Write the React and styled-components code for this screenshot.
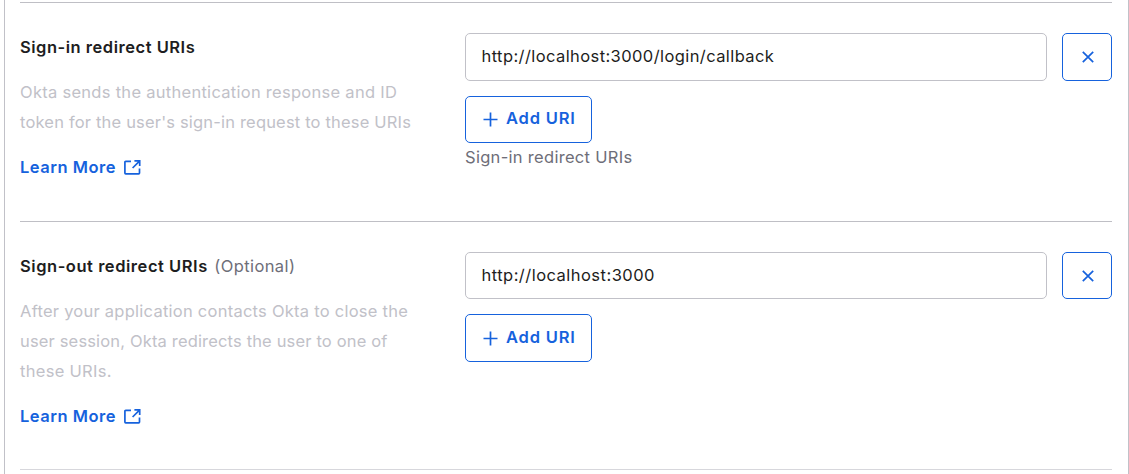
import React from "react";
import styled, { createGlobalStyle } from "styled-components";

const GlobalStyle = createGlobalStyle`
  * { box-sizing: border-box; }
  body {
    margin: 0;
    background: #fff;
    color: #1d1d21;
    font-family: Inter, "Liberation Sans", sans-serif;
    font-size: 16.5px;
    overflow: hidden;
  }
`;

const Panel = styled.main`
  width: 1125px;
  height: 474px;
  margin-left: 4px;
  padding: 2px 16px 0 15px;
  border: solid #c1c1c8;
  border-width: 0 1px;
  overflow: hidden;
`;

const Section = styled.section`
  display: flex;
  height: ${(p) => p.$height}px;
  padding-top: 30px;
  border-top: 1px solid ${(p) => p.$line || "#bfbfc5"};
`;

const Info = styled.div`
  width: 445px;
  flex: none;
`;

const Fields = styled.div`
  flex: 1;
`;

const Text = styled.span`
  letter-spacing: ${(p) => p.$track || 0}px;
  white-space: pre;
`;

const Heading = styled.h2`
  display: flex;
  gap: 6.5px;
  margin: 0 0 15px;
  font-size: 16.5px;
  font-weight: 600;
  line-height: 29px;
`;

const Optional = styled(Text)`
  color: #6e6e78;
  font-weight: 400;
`;

const Description = styled.p`
  display: flex;
  flex-direction: column;
  margin: 0 0 15px;
  color: #c1c1c8;
  line-height: 30px;
`;

const Link = styled.a`
  display: inline-flex;
  align-items: center;
  gap: 8px;
  height: 30px;
  color: #1662dd;
  font-weight: 600;
  line-height: 30px;
`;

const UriRow = styled.div`
  display: flex;
  gap: 15px;
  height: ${(p) => p.$height}px;
  margin-bottom: 15px;
`;

const UriInput = styled.div`
  flex: 1;
  padding: 0 15px 0 15.5px;
  border: 1px solid #c1c1c8;
  border-radius: 5px;
  line-height: 45px;
`;

const Button = styled.button`
  display: flex;
  align-items: center;
  justify-content: center;
  padding: 0;
  border: 1px solid #1662dd;
  border-radius: 5px;
  background: #fff;
  color: #1662dd;
  font: inherit;
  font-weight: 600;
`;

const RemoveButton = styled(Button)`
  width: 50px;
  padding-left: 1px;
`;

const AddButton = styled(Button)`
  width: 127px;
  height: ${(p) => p.$height}px;
  justify-content: flex-start;
  gap: 8px;
  padding: 0 0 0 17px;

  ${Text} {
    padding-bottom: 3px;
  }
`;

const Hint = styled.div`
  color: #6e6e78;
  line-height: 28px;
`;

const ExternalIcon = () => (
  <svg width="17" height="16" viewBox="0 0 17 16" fill="none" stroke="currentColor" strokeWidth="1.7">
    <path d="M7 2.3H1.7q-.8 0-.8.8v10.9q0 .8.8.8h13q.8 0 .8-.8V9.5M10.4 1.8h5.3v5.1M15.5 2.1L8.6 9" />
  </svg>
);

const PlusIcon = () => (
  <svg width="15" height="15" viewBox="0 0 15 15" fill="none" stroke="currentColor" strokeWidth="1.7">
    <path d="M7.5 .5v14M.5 7.5h14" />
  </svg>
);

const CloseIcon = () => (
  <svg width="12" height="12" viewBox="0 0 12 12" fill="none" stroke="currentColor" strokeWidth="1.7">
    <path d="M.8 .8l10.4 10.4M11.2 .8L.8 11.2" />
  </svg>
);

const LearnMore = () => (
  <Link>
    <Text $track={0.51}>Learn More</Text>
    <ExternalIcon />
  </Link>
);

const UriField = ({ value, track, height, addHeight }) => (
  <>
    <UriRow $height={height}>
      <UriInput><Text $track={track}>{value}</Text></UriInput>
      <RemoveButton aria-label="Remove"><CloseIcon /></RemoveButton>
    </UriRow>
    <AddButton $height={addHeight}>
      <PlusIcon />
      <Text $track={0.82}>Add URI</Text>
    </AddButton>
  </>
);

export default function App() {
  return (
    <>
      <GlobalStyle />
      <Panel>
        <Section $height={219}>
          <Info>
            <Heading><Text $track={0.52}>Sign-in redirect URIs</Text></Heading>
            <Description>
              <Text $track={0.28}>Okta sends the authentication response and ID</Text>
              <Text $track={0.18}>token for the user's sign-in request to these URIs</Text>
            </Description>
            <LearnMore />
          </Info>
          <Fields>
            <UriField value="http://localhost:3000/login/callback" track={0.41} height={48} addHeight={47} />
            <Hint><Text $track={0.3}>Sign-in redirect URIs</Text></Hint>
          </Fields>
        </Section>
        <Section $height={248}>
          <Info>
            <Heading>
              <Text $track={0.54}>Sign-out redirect URIs</Text>
              <Optional $track={0.4}>(Optional)</Optional>
            </Heading>
            <Description>
              <Text $track={0.25}>After your application contacts Okta to close the</Text>
              <Text $track={0.16}>user session, Okta redirects the user to one of</Text>
              <Text $track={0.3}>these URIs.</Text>
            </Description>
            <LearnMore />
          </Info>
          <Fields>
            <UriField value="http://localhost:3000" track={0.47} height={47} addHeight={48} />
          </Fields>
        </Section>
        <Section $height={5} $line="#d7d7dc" />
      </Panel>
    </>
  );
}
